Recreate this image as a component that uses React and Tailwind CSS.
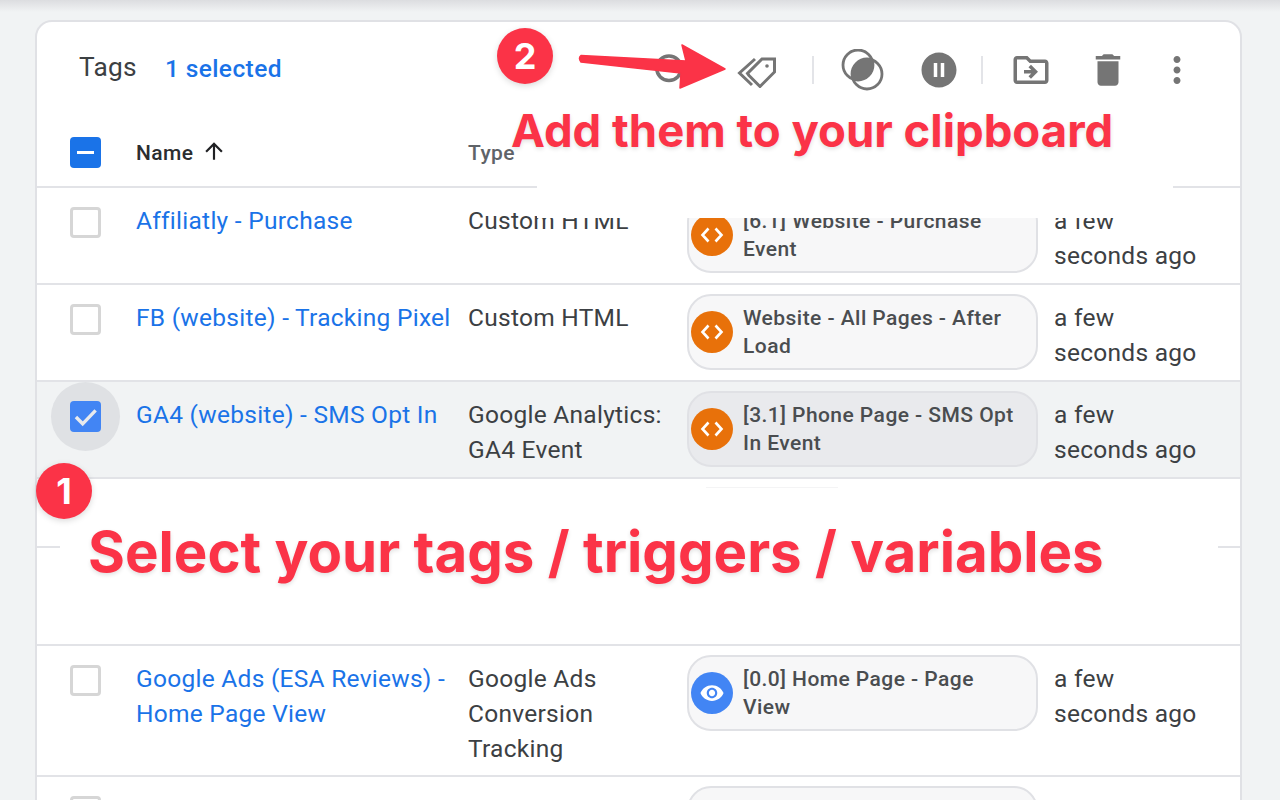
import React from 'react';

const rows = [
  { name: 'Affiliatly - Purchase', type: 'Custom HTML', chip: '[6.1] Website - Purchase Event', icon: 'code', edited: 'a few seconds ago' },
  { name: 'FB (website) - Tracking Pixel', type: 'Custom HTML', chip: 'Website - All Pages - After Load', icon: 'code', edited: 'a few seconds ago' },
  { name: 'GA4 (website) - SMS Opt In', type: 'Google Analytics: GA4 Event', chip: '[3.1] Phone Page - SMS Opt In Event', icon: 'code', edited: 'a few seconds ago', selected: true },
];

const CodeIcon = () => (
  <svg viewBox="0 0 42 42" className="w-[42px] h-[42px]">
    <circle cx="21" cy="21" r="21" fill="#e8710a" />
    <path d="M17.5 14.5 11.5 21l6 6.5M24.5 14.5l6 6.5-6 6.5" fill="none" stroke="#fff" strokeWidth="2.6" />
  </svg>
);

const EyeIcon = () => (
  <svg viewBox="0 0 42 42" className="w-[42px] h-[42px]">
    <circle cx="21" cy="21" r="21" fill="#4285f4" />
    <g transform="translate(8.4 8.4) scale(1.05)">
      <path fill="#fff" d="M12 4.5C7 4.5 2.73 7.61 1 12c1.73 4.39 6 7.5 11 7.5s9.27-3.11 11-7.5c-1.73-4.39-6-7.5-11-7.5zM12 17c-2.76 0-5-2.24-5-5s2.24-5 5-5 5 2.24 5 5-2.24 5-5 5zm0-8c-1.66 0-3 1.34-3 3s1.34 3 3 3 3-1.34 3-3-1.34-3-3-3z" />
    </g>
  </svg>
);

const Checkbox = ({ selected }) => {
  if (selected) {
    return (
      <div className="relative w-[31px] h-[31px] rounded-[4px] bg-[#4285f4] flex items-center justify-center">
        <div className="absolute -left-[19px] -top-[19px] w-[69px] h-[69px] rounded-full bg-[#dfe1e4] -z-10" />
        <svg viewBox="0 0 24 24" className="w-[27px] h-[27px]">
          <path d="M3.5 12.5 9.5 18.5 21 6.5" fill="none" stroke="#e8eaed" strokeWidth="3" />
        </svg>
      </div>
    );
  }
  return <div className="w-[31px] h-[31px] rounded-[4px] border-[3px] border-[#d6d6d6] bg-white" />;
};

const Row = ({ row }) => (
  <div className={`flex border-b-2 border-[#e2e3e7] ${row.selected ? 'bg-[#f1f3f4]' : 'bg-white'}`}>
    <div className="relative z-0 w-[99px] pl-[33px] pt-[19px] shrink-0">
      <Checkbox selected={row.selected} />
    </div>
    <div className="w-[332px] pt-[15px] pb-[9px] pr-[12px] shrink-0 text-[#1a73e8]">{row.name}</div>
    <div className="w-[219px] pt-[15px] pb-[9px] pr-[10px] shrink-0 text-[#3c4043]">{row.type}</div>
    <div className="w-[351px] pt-[9px] pb-[10px] shrink-0">
      <div className={`h-[76px] flex items-center pl-[2px] pr-[13px] gap-[10px] rounded-[24px] border-2 border-[#e0e1e5] ${row.selected ? 'bg-[#e9eaed]' : 'bg-[#f7f7f8]'}`}>
        <div className="shrink-0">{row.icon === 'eye' ? <EyeIcon /> : row.icon === 'code' ? <CodeIcon /> : null}</div>
        <div className="text-[21px] leading-[28px] font-medium tracking-[0.45px] text-[#4a4d50]">{row.chip}</div>
      </div>
    </div>
    <div className="ml-[16px] w-[150px] pt-[15px] pb-[9px] text-[#3c4043]">{row.edited}</div>
  </div>
);

const Toolbar = () => (
  <div className="h-[96px] flex items-center pr-[42px]">
    <div className="ml-[42px] text-[26.25px] text-[#3c4043] -mt-[6px]">Tags</div>
    <div className="ml-[28px] text-[24.5px] font-medium text-[#1a73e8] -mt-[4px] tracking-[0.4px]">1 selected</div>
    <svg viewBox="0 0 24 24" className="ml-auto w-[42px] h-[42px]">
      <circle cx="12" cy="11" r="7" fill="none" stroke="#757575" strokeWidth="2" />
    </svg>
    <svg viewBox="0 0 42 42" className="ml-[46px] w-[42px] h-[42px] -mt-[6px]">
      <g fill="none" stroke="#757575" strokeWidth="3">
        <path d="M13 29.5 24 40.5 38.5 26V13H26L11.5 27.500Z" />
        <path d="M19 13 3.500 27 16 39" />
      </g>
      <circle cx="31" cy="20" r="1.800" fill="#757575" />
    </svg>
    <div className="ml-[34px] w-[2px] h-[28px] bg-[#e3e4e8]" />
    <svg viewBox="0 0 42 42" className="ml-[26px] w-[44px] h-[42px]">
      <defs>
        <clipPath id="overlap-clip">
          <circle cx="17" cy="16" r="15" />
        </clipPath>
      </defs>
      <circle cx="17" cy="16" r="15" fill="none" stroke="#757575" strokeWidth="2.800" />
      <circle cx="26" cy="25" r="15" fill="none" stroke="#757575" strokeWidth="2.800" />
      <circle cx="26" cy="25" r="15" fill="#757575" clipPath="url(#overlap-clip)" />
    </svg>
    <svg viewBox="0 0 24 24" className="ml-[34px] w-[42px] h-[42px]">
      <path fill="#757575" d="M12 2C6.480 2 2 6.480 2 12s4.480 10 10 10 10-4.480 10-10S17.520 2 12 2zm-1 14H9V8h2v8zm4 0h-2V8h2v8z" />
    </svg>
    <div className="ml-[21px] w-[2px] h-[28px] bg-[#e3e4e8]" />
    <svg viewBox="0 0 24 24" className="ml-[27px] w-[42px] h-[42px]">
      <path fill="#757575" d="M20 6h-8l-2-2H4c-1.100 0-2 .9-2 2v12c0 1.100.9 2 2 2h16c1.100 0 2-.9 2-2V8c0-1.100-.9-2-2-2zm0 12H4V6h5.170l2 2H20v10z" />
      <path fill="#757575" d="M12.160 12H8v2h4.160l-1.590 1.590L11.990 17 16 13l-4.010-4-1.420 1.410z" />
    </svg>
    <svg viewBox="0 0 24 24" className="ml-[35px] w-[42px] h-[42px]">
      <path fill="#757575" d="M6 19c0 1.100.9 2 2 2h8c1.100 0 2-.9 2-2V7H6v12zM19 4h-3.500l-1-1h-5l-1 1H5v2h14V4z" />
    </svg>
    <svg viewBox="0 0 24 24" className="ml-[27px] w-[42px] h-[42px]">
      <path fill="#757575" d="M12 8c1.100 0 2-.9 2-2s-.9-2-2-2-2 .9-2 2 .9 2 2 2zm0 2c-1.100 0-2 .9-2 2s.9 2 2 2 2-.9 2-2-.9-2-2-2zm0 6c-1.100 0-2 .9-2 2s.9 2 2 2 2-.9 2-2-.9-2-2-2z" />
    </svg>
  </div>
);

const Badge = ({ n, className }) => (
  <div className={`absolute w-[56px] h-[56px] rounded-full bg-[#fb3347] text-white flex items-center justify-center font-['Inter',sans-serif] text-[36px] font-bold shadow-[0_2px_6px_rgba(0,0,0,0.15)] ${className}`}>
    {n}
  </div>
);

const App = () => {
  return (
    <div className="relative w-[1280px] h-[800px] overflow-hidden bg-[#f1f3f4] font-['Roboto',sans-serif] pt-[20px] pl-[35px]">
      <div className="absolute left-0 top-0 w-full h-[12px] bg-linear-to-b from-[#dcdde0] to-[#f1f3f4]" />
      <div className="relative w-[1207px] h-[900px] bg-white border-2 border-[#e0e1e5] rounded-t-[17px] text-[24.5px] leading-[35px] tracking-[0.27px]">
        <Toolbar />
        <div className="h-[70px] flex items-center border-b-2 border-[#e2e3e7]">
          <div className="w-[99px] pl-[33px] shrink-0">
            <div className="w-[31px] h-[31px] rounded-[4px] bg-[#1a73e8] flex items-center justify-center">
              <div className="w-[17px] h-[3px] bg-white" />
            </div>
          </div>
          <div className="w-[332px] shrink-0 flex items-center gap-[8px] mt-[3px] text-[21px] font-medium text-[#2b2d30] tracking-[0.4px]">
            Name
            <svg viewBox="0 0 24 24" className="w-[26px] h-[26px] -mt-[6px]">
              <path fill="#202124" d="M4 12l1.410 1.410L11 7.830V20h2V7.830l5.580 5.590L20 12l-8-8-8 8z" />
            </svg>
          </div>
          <div className="mt-[3px] text-[21px] font-medium text-[#5f6368] tracking-[0.4px]">Type</div>
        </div>
        {rows.map((row) => (
          <Row key={row.name} row={row} />
        ))}
        <div className="h-[69px] border-b-2 border-[#e2e3e7]" />
        <div className="h-[98px] border-b-2 border-[#e2e3e7]" />
        <Row row={{ name: 'Google Ads (ESA Reviews) - Home Page View', type: 'Google Ads Conversion Tracking', chip: '[0.0] Home Page - Page View', icon: 'eye', edited: 'a few seconds ago' }} />
        <Row row={{ name: '', type: '', chip: '', icon: 'none', edited: '' }} />
      </div>

      {/* white boxes the annotations sit on */}
      <div className="absolute left-[537px] top-[108px] w-[636px] h-[110px] bg-white" />
      <div className="absolute left-[60px] top-[481px] w-[1158px] h-[160px] bg-white" />
      <div className="absolute left-[706px] top-[487px] w-[132px] h-px bg-[#f4f4f5]" />

      <Badge n="2" className="left-[497px] top-[28px]" />
      <Badge n="1" className="left-[36px] top-[463px]" />

      <svg viewBox="0 0 1280 800" className="absolute left-0 top-0 w-[1280px] h-[800px] pointer-events-none">
        <path
          d="M581 55.500 L686 61 L682 45 L725 69 L680 88 L681 73 L581 62 Q578 58 581 55.500Z"
          fill="#fb3347"
          stroke="#fb3347"
          strokeWidth="1.500"
          strokeLinejoin="round"
        />
      </svg>

      <div className="absolute left-[511px] top-[103px] text-[45.5px] leading-[56px] font-['Inter',sans-serif] font-bold text-[#fb3347] whitespace-nowrap [text-shadow:0_2px_4px_rgba(0,0,0,0.12)]">
        Add them to your clipboard
      </div>
      <div className="absolute left-[88px] top-[519px] text-[56.4px] leading-[66px] font-['Inter',sans-serif] font-bold text-[#fb3347] whitespace-nowrap [text-shadow:0_2px_4px_rgba(0,0,0,0.12)]">
        Select your tags / triggers / variables
      </div>
    </div>
  );
};

export default App;
